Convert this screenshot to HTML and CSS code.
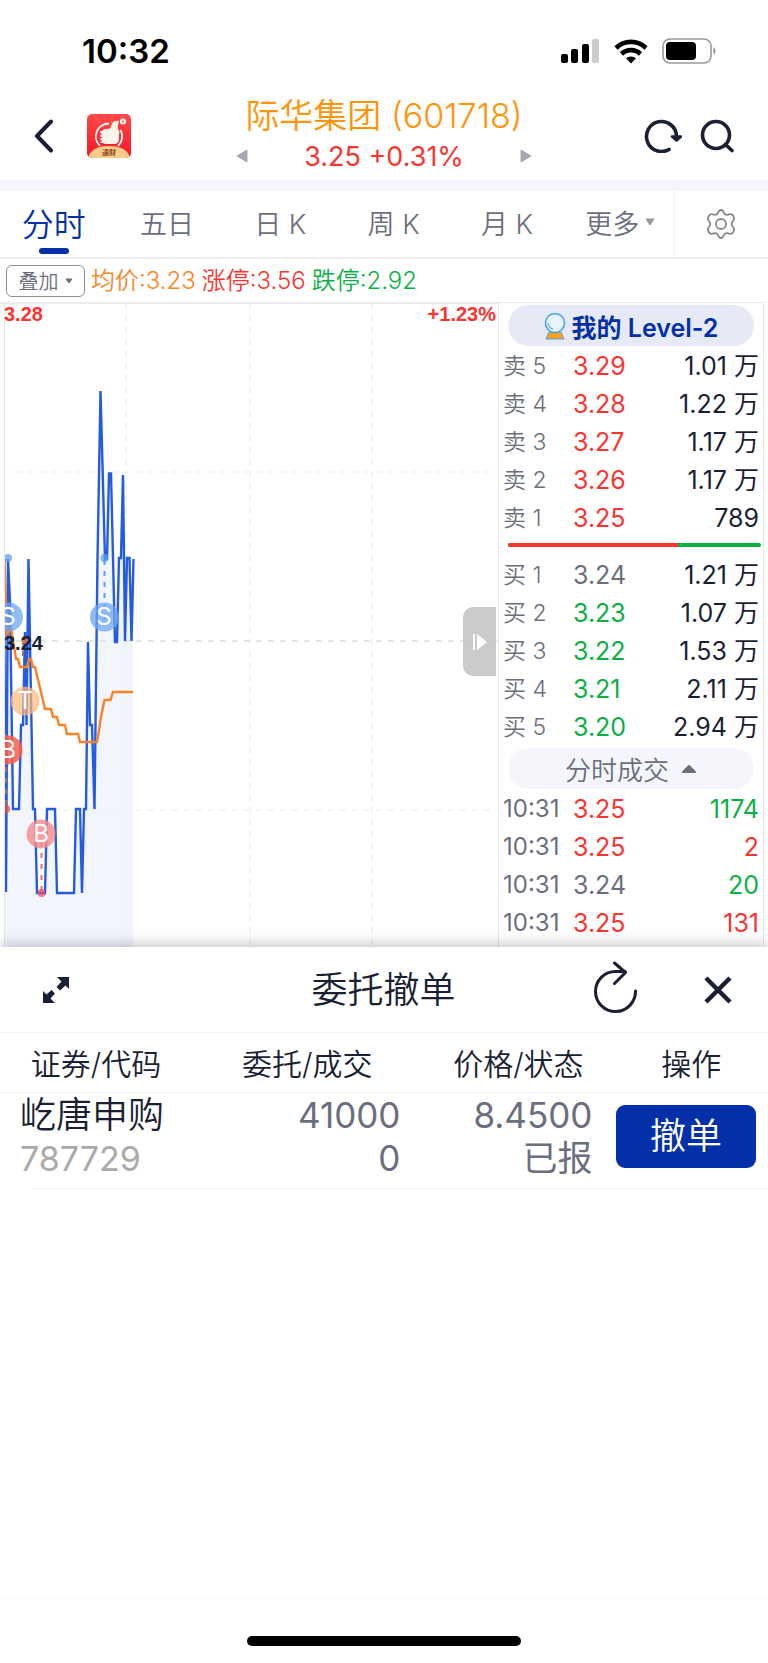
FILE: index.html
```html
<!DOCTYPE html>
<html lang="zh-CN">
<head>
    <meta charset="UTF-8">
    <meta name="viewport" content="width=device-width, initial-scale=1.0">
    <title>际华集团 (601718)</title>
    <link rel="stylesheet" href="styles.css">
</head>
<body>
    <!-- Status bar -->
    <div class="status-bar">
        <span class="clock">10:32</span>
        <div class="status-icons">
            <svg width="39" height="25" viewBox="0 0 39 25">
                <rect x="0" y="15" width="7" height="9" rx="2"/>
                <rect x="10" y="10" width="7" height="14" rx="2"/>
                <rect x="21" y="5" width="7" height="19" rx="2"/>
                <rect x="31" y="0" width="7" height="24" rx="2" fill="#ccc"/>
            </svg>
            <svg width="34" height="25" viewBox="0 0 34 25">
                <path d="M17 24.500l-5-5.200a7.500 7.500 0 0 1 10 0z"/>
                <path d="M2 9a21.500 21.500 0 0 1 30 0M7.500 15a13.500 13.500 0 0 1 19 0" fill="none" stroke="#000" stroke-width="4.600"/>
            </svg>
            <svg width="55" height="26" viewBox="0 0 55 26">
                <rect x="1" y="1" width="48" height="24" rx="7" fill="none" stroke="#999" stroke-width="1.600"/>
                <rect x="4" y="4" width="30" height="18" rx="4"/>
                <path d="M51.500 9q4 4 0 8z" fill="#888"/>
            </svg>
        </div>
    </div>

    <!-- Stock header -->
    <header class="stock-header">
        <div class="header-side">
            <button class="icon-btn" aria-label="返回">
                <svg width="20" height="34" viewBox="0 0 20 34">
                    <path d="M17 2.500L3 17l14 14.500" class="line" stroke-width="4"/>
                </svg>
            </button>
            <a href="#" class="logo" aria-label="通财">
                <svg width="44" height="44" viewBox="0 0 44 44">
                    <defs>
                        <linearGradient id="red" x1="0" y1="0" x2="0" y2="1">
                            <stop offset="0" stop-color="#ff4a48"/>
                            <stop offset="1" stop-color="#fa1527"/>
                        </linearGradient>
                        <clipPath id="logo-clip"><rect width="44" height="44" rx="5"/></clipPath>
                    </defs>
                    <g clip-path="url(#logo-clip)">
                        <rect width="44" height="44" fill="url(#red)"/>
                        <path d="M22 20L6 0M22 20L16 0M22 20L26 0" stroke="#ff7668" stroke-width="1" opacity=".5"/>
                        <path d="M22 9.500A13 13 0 0 0 13 32M31 32A13 13 0 0 0 33.500 16" fill="none" stroke="#fff" stroke-width="1.800"/>
                        <path d="M15 17q1-2 4-2 4 0 5-2 1-5 4-6 4-1 4 1-2 3-1 7 2 2 1 6v5q-1 4-5 4h-8q-4 0-4-4z" fill="#fff4e8"/>
                        <path d="M15 17v12" stroke="#fff" stroke-width="3" stroke-dasharray="2.500 1"/>
                        <circle cx="36" cy="7.500" r="3" fill="#fff"/>
                        <circle cx="36" cy="7.500" r="1" fill="#fa3a3a"/>
                        <path d="M1 44q3-12 21-12t21 12z" fill="#f7cb88"/>
                        <text x="22" y="41" class="logo-text">通财</text>
                    </g>
                </svg>
            </a>
        </div>
        <div class="stock">
            <button class="icon-btn" aria-label="上一只">
                <svg width="12" height="14" viewBox="0 0 12 14"><path d="M11 1v12L1 7z" class="arrow"/></svg>
            </button>
            <div class="stock-text">
                <h1 class="stock-name">际华集团 (601718)</h1>
                <p class="stock-price">3.25 +0.31%</p>
            </div>
            <button class="icon-btn" aria-label="下一只">
                <svg width="12" height="14" viewBox="0 0 12 14"><path d="M1 1v12l10-6z" class="arrow"/></svg>
            </button>
        </div>
        <div class="header-side header-tools">
            <button class="icon-btn" aria-label="刷新">
                <svg width="38" height="34" viewBox="0 0 38 34">
                    <path d="M25 30.500A15 15 0 1 1 32.500 17" class="line" stroke-width="3.600"/>
                    <path d="M28 17.500l4.500 4 4.500-4z" class="line arrow-head" stroke-width="2.600"/>
                </svg>
            </button>
            <button class="icon-btn" aria-label="搜索">
                <svg width="34" height="34" viewBox="0 0 34 34">
                    <circle cx="16" cy="16" r="13.500" class="line" stroke-width="3.600"/>
                    <path d="M25.500 25.500l6.500 6" class="line" stroke-width="3.600"/>
                </svg>
            </button>
        </div>
    </header>

    <!-- Period tabs -->
    <nav class="tabs">
        <a href="#" class="tab active">分时</a>
        <a href="#" class="tab">五日</a>
        <a href="#" class="tab">日 K</a>
        <a href="#" class="tab">周 K</a>
        <a href="#" class="tab">月 K</a>
        <a href="#" class="tab tab-more">更多
            <svg width="10" height="8" viewBox="0 0 10 8"><path d="M1 1h8L5 7z" fill="#999" stroke="#999" stroke-linejoin="round"/></svg>
        </a>
        <button class="icon-btn settings" aria-label="设置">
            <svg width="30" height="32" viewBox="-15 -16 30 32">
                <path d="M-3-11Q-2-14 0-14T3-11Q4-9 6.500-9.200Q10-10.500 11.500-9T13.200-5Q13-3.500 11.500-2.500Q10 0 11.500 2.500Q13 3.500 13.200 5T11.500 9Q10 10.500 6.500 9.200Q4 9 3 11Q2 14 0 14T-3 11Q-4 9-6.500 9.200Q-10 10.500-11.500 9T-13.200 5Q-13 3.500-11.500 2.500Q-10 0-11.500-2.500Q-13-3.500-13.200-5T-11.500-9Q-10-10.500-6.500-9.200Q-4-9-3-11Z" fill="none" stroke="#888" stroke-width="1.800"/>
                <circle r="5" fill="none" stroke="#888" stroke-width="1.800"/>
            </svg>
        </button>
    </nav>

    <div class="info-row">
        <button class="overlay-btn">叠加
            <svg width="8" height="6" viewBox="0 0 8 6"><path d="M1 1h6L4 5z" fill="#6b6e7d" stroke="#6b6e7d" stroke-linejoin="round"/></svg>
        </button>
        <span class="orange">均价:3.23</span>
        <span class="red">涨停:3.56</span>
        <span class="green">跌停:2.92</span>
    </div>

    <main class="quote">
        <!-- Time-sharing chart -->
        <section class="chart">
            <svg class="chart-plot" viewBox="0 2 498 643" preserveAspectRatio="xMinYMin slice">
                <defs>
                    <clipPath id="plot-clip"><rect x="4" y="0" width="494" height="645"/></clipPath>
                </defs>
                <g clip-path="url(#plot-clip)">
                    <path d="M4 257L6 590 8 257 13 507H19L21 423H23L25 339 27 423 29 257 33 507H35L37 591H45L47 507H55L57 591H74L76 507H80L82 591 84 507H86L88 339 90 423H92L94 507 97 339 100 89 105 257H107L109 172H111L115 339H117L119 257H121L123 172 125 339 127 257H129L131 339 133 257V645H4z" fill="#f3f5fd"/>
                    <path d="M126 1V645M250 1V645M372 1V645" stroke="#eef1f2" stroke-width="1.500" stroke-dasharray="6 6"/>
                    <path d="M4 170H498M4 508H498" stroke="#f1f3f4" stroke-width="1.500" stroke-dasharray="6 6"/>
                    <path d="M4 339H498" stroke="#d9dcdf" stroke-width="1.500" stroke-dasharray="6 6"/>
                    <path d="M4 257L6 590 8 257 10 300 13 507H19L21 423H23L25 330 26.500 423 28.500 257 33 507H35L37 591H45L47 507H55L57 591H74L76 507H80L82 591 84 507H86L88 340 90 423H92L94.500 507 97.500 257 100.500 89 105 257H107L109 171.500H111L115 340H117L119 256H121L123 173 125 339 127 256H129.500L131.500 339 133.500 257" fill="none" stroke="#245be0" stroke-width="2.400"/>
                    <path d="M4.500 257L7 332 11 326 16 357H18L20 365H27L29 357H31L33 365H35L45 407H51L53 415H57L59 423H65L67 432H78L80 440H97Q99 429 101 415L104.500 398H110.500L113 390H133" fill="none" stroke="#fb8122" stroke-width="2.400"/>
                    <path d="M104.500 258V322" class="dash" stroke="#5da2f0"/>
                    <path d="M23 338V356M6 432V508" class="dash" stroke="#a86c5f"/>
                    <path d="M41.500 540V590" class="dash" stroke="#f06a70"/>
                    <circle cx="8" cy="256" r="4" fill="#619de8" opacity=".75"/>
                    <circle cx="104.500" cy="256" r="4" fill="#619de8" opacity=".75"/>
                    <circle cx="25" cy="338" r="4" fill="#dc8543" opacity=".75"/>
                    <circle cx="6" cy="507" r="4" fill="#ea533d" opacity=".8"/>
                    <circle cx="41.500" cy="591" r="4" fill="#ed4f62" opacity=".75"/>
                    <circle cx="8.500" cy="315" r="14.500" fill="#6ca5f4" opacity=".75"/>
                    <circle cx="104.500" cy="315" r="14.500" fill="#6ca5f4" opacity=".75"/>
                    <circle cx="25" cy="399" r="14.500" fill="#ffb978" opacity=".7"/>
                    <circle cx="8" cy="448" r="14.500" fill="#fb5c4a" opacity=".85"/>
                    <circle cx="41" cy="532" r="14.500" fill="#f98b8a" opacity=".8"/>
                    <text x="8" y="323" class="mark">S</text>
                    <text x="104" y="323" class="mark">S</text>
                    <text x="25" y="407" class="mark">T</text>
                    <text x="8" y="456" class="mark">B</text>
                    <text x="41" y="540" class="mark">B</text>
                </g>
                <text x="4" y="348" class="axis">3.24</text>
            </svg>
            <div class="chart-labels">
                <span>3.28</span>
                <span>+1.23%</span>
            </div>
            <button class="fold-btn" aria-label="收起盘口">
                <svg width="16" height="18" viewBox="0 0 16 18"><path d="M1 1h2v16H1zM5 1l10 8-10 8z" fill="#fff"/></svg>
            </button>
        </section>

        <!-- Order book -->
        <section class="book">
            <button class="level-btn">
                <svg width="22" height="28" viewBox="0 0 22 28">
                    <path d="M5 20h12l3 7H2z" fill="#f9a11b" stroke="#4aa3e8" stroke-width="1"/>
                    <circle cx="11" cy="11" r="9.500" fill="#e9f3fd" stroke="#4aa3e8" stroke-width="1.600"/>
                    <path d="M4 11q1 5 5 6" fill="none" stroke="#4aa3e8" stroke-width="1.200"/>
                </svg>
                我的 Level-2
            </button>
            <table class="book-table">
                <tbody>
                    <tr><th>卖 5</th><td class="red">3.29</td><td>1.01 万</td></tr>
                    <tr><th>卖 4</th><td class="red">3.28</td><td>1.22 万</td></tr>
                    <tr><th>卖 3</th><td class="red">3.27</td><td>1.17 万</td></tr>
                    <tr><th>卖 2</th><td class="red">3.26</td><td>1.17 万</td></tr>
                    <tr><th>卖 1</th><td class="red">3.25</td><td>789</td></tr>
                </tbody>
            </table>
            <div class="ratio"><span class="ratio-sell" style="width: 67%"></span></div>
            <table class="book-table">
                <tbody>
                    <tr><th>买 1</th><td class="grey">3.24</td><td>1.21 万</td></tr>
                    <tr><th>买 2</th><td class="green">3.23</td><td>1.07 万</td></tr>
                    <tr><th>买 3</th><td class="green">3.22</td><td>1.53 万</td></tr>
                    <tr><th>买 4</th><td class="green">3.21</td><td>2.11 万</td></tr>
                    <tr><th>买 5</th><td class="green">3.20</td><td>2.94 万</td></tr>
                </tbody>
            </table>
            <button class="deal-btn">分时成交
                <svg width="16" height="12" viewBox="0 0 16 12"><path d="M2 9h12L8 3z" fill="#6b6e7d" stroke="#6b6e7d" stroke-width="2" stroke-linejoin="round"/></svg>
            </button>
            <table class="book-table deals">
                <tbody>
                    <tr><th>10:31</th><td class="red">3.25</td><td class="green">1174</td></tr>
                    <tr><th>10:31</th><td class="red">3.25</td><td class="red">2</td></tr>
                    <tr><th>10:31</th><td class="grey">3.24</td><td class="green">20</td></tr>
                    <tr><th>10:31</th><td class="red">3.25</td><td class="red">131</td></tr>
                </tbody>
            </table>
        </section>
    </main>

    <!-- Cancel order sheet -->
    <section class="sheet">
        <div class="sheet-header">
            <div class="sheet-side">
                <button class="icon-btn" aria-label="展开">
                    <svg width="28" height="28" viewBox="0 0 28 28">
                        <path d="M15 1h12v12l-3.500-3.500-5.500 5-3.500-3.500 5-5.500zM1 27V15l3.500 3.500 5-4.500 3.500 3.500-4.500 5L13 27z" fill="#1a1f33"/>
                    </svg>
                </button>
            </div>
            <h2 class="sheet-title">委托撤单</h2>
            <div class="sheet-side sheet-tools">
                <button class="icon-btn" aria-label="刷新">
                    <svg width="44" height="58" viewBox="0 0 44 58">
                        <path d="M41.500 30A20 20 0 1 1 21.500 10.500H31" class="line" stroke-width="3"/>
                        <path d="M20.500 2L31.500 11.500 20.500 22.500" class="line" stroke-width="3"/>
                    </svg>
                </button>
                <button class="icon-btn" aria-label="关闭">
                    <svg width="28" height="28" viewBox="0 0 28 28"><path d="M2 2l24 24M26 2L2 26" stroke="#1a1f33" stroke-width="4.500"/></svg>
                </button>
            </div>
        </div>
        <table class="orders">
            <thead>
                <tr><th>证券/代码</th><th class="wide">委托/成交</th><th>价格/状态</th><th class="narrow">操作</th></tr>
            </thead>
            <tbody>
                <tr>
                    <td class="name">屹唐申购<br><span class="code">787729</span></td>
                    <td>41000<br>0</td>
                    <td>8.4500<br>已报</td>
                    <td class="action"><button class="cancel-btn">撤单</button></td>
                </tr>
            </tbody>
        </table>
    </section>

    <footer class="home-bar"><span></span></footer>
</body>
</html>
```

FILE: styles.css
```css
* {
    box-sizing: border-box;
}

body {
    margin: 0;
    min-height: 100vh;
    display: flex;
    flex-direction: column;
    font-family: Inter, "Noto Sans CJK SC", sans-serif;
    font-size: 25px;
    font-weight: 350;
    color: #1a1f33;
    background: #fff;
}

svg {
    display: block;
    flex: none;
}

button {
    font: inherit;
    color: inherit;
    border: none;
    background: none;
    padding: 0;
    cursor: pointer;
}

a {
    color: inherit;
    text-decoration: none;
}

.icon-btn {
    display: flex;
    align-items: center;
    justify-content: center;
}

.line {
    fill: none;
    stroke: #1a1f33;
    stroke-linecap: round;
    stroke-linejoin: round;
}

.arrow-head {
    fill: #1a1f33;
}

.red {
    color: #fb3430;
}

.green {
    color: #0bb043;
}

.orange {
    color: #fd8424;
}

.grey {
    color: #6b6e7d;
}

/* Status bar */
.status-bar {
    height: 102px;
    padding: 0 51px 0 82px;
    display: flex;
    justify-content: space-between;
    align-items: center;
}

.clock {
    font-size: 33px;
    font-weight: 600;
    color: #000;
}

.status-icons {
    display: flex;
    align-items: center;
    gap: 14px;
}

/* Stock header */
.stock-header {
    height: 89px;
    padding: 0 34px 10px;
    display: flex;
    align-items: center;
    border-bottom: 11px solid #f4f6fb;
}

.header-side {
    flex: 1;
    display: flex;
    align-items: center;
    gap: 33px;
}

.header-tools {
    justify-content: flex-end;
    gap: 18px;
}

.logo-text {
    font-size: 7px;
    font-weight: 700;
    fill: #8a4a1c;
    text-anchor: middle;
}

.stock {
    display: flex;
    align-items: flex-end;
}

.stock .icon-btn {
    height: 42px;
}

.stock-text {
    margin: 0 -3px;
    text-align: center;
}

.stock-name {
    margin: 0;
    font-size: 34px;
    line-height: 42px;
    font-weight: 350;
    color: #ff9408;
}

.stock-price {
    margin: 0;
    font-size: 27px;
    font-weight: 400;
    line-height: 40px;
    color: #fb3430;
}

.arrow {
    fill: #a5a6b0;
    stroke: #a5a6b0;
    stroke-linejoin: round;
}

/* Tabs */
.tabs {
    height: 68px;
    display: flex;
    border-bottom: 2px solid #eeeff0;
    color: #6b6e7d;
    font-size: 27px;
}

.tab {
    flex: 1;
    display: flex;
    justify-content: center;
    align-items: center;
    position: relative;
    padding: 0 0 4px 6px;
}

.tab.active {
    padding-left: 0;
    font-size: 32px;
    color: #0330a8;
}

.tab.active::after {
    content: "";
    position: absolute;
    bottom: 3px;
    width: 30px;
    height: 6px;
    border-radius: 3px;
    background: #0330a8;
}

.tab-more {
    gap: 6px;
}

.settings {
    width: 94px;
    border-left: 1px solid #eeeff0;
}

.info-row {
    height: 43px;
    padding: 0 6px;
    display: flex;
    align-items: center;
    gap: 6px;
    font-size: 24px;
}

.info-row span {
    padding-bottom: 4px;
}

.overlay-btn {
    height: 32px;
    width: 79px;
    display: flex;
    align-items: center;
    justify-content: center;
    gap: 6px;
    font-size: 20px;
    color: #6b6e7d;
    border: 1px solid #8b8d98;
    border-radius: 6px;
}

/* Chart and order book */
.quote {
    height: 645px;
    display: flex;
    overflow: hidden;
}

.chart {
    flex: 1;
    position: relative;
    border-top: 2px solid #eaedee;
}

.chart::before {
    content: "";
    position: absolute;
    inset: 0 auto 0 4px;
    border-left: 1px solid #e4e7ea;
}

.chart-plot {
    width: 100%;
    height: 100%;
}

.dash {
    stroke-width: 2;
    stroke-dasharray: 5 6;
}

.mark {
    font-size: 24px;
    font-weight: 400;
    fill: #fff;
    text-anchor: middle;
}

.axis {
    font: bold 20px "Liberation Sans", sans-serif;
    fill: #1a1f33;
}

.chart-labels {
    position: absolute;
    top: 0;
    left: 4px;
    right: 2px;
    display: flex;
    justify-content: space-between;
    font: bold 20px/20px "Liberation Sans", sans-serif;
    color: #fb3430;
}

.fold-btn {
    position: absolute;
    right: 2px;
    top: 303px;
    width: 33px;
    height: 69px;
    display: flex;
    align-items: center;
    justify-content: center;
    background: rgba(190, 190, 190, 0.8);
    border-radius: 10px 0 0 10px;
}

.book {
    width: 266px;
    margin-right: 4px;
    border: 1px solid #e4e7ea;
    border-bottom: none;
}

.level-btn,
.deal-btn {
    width: 246px;
    height: 41px;
    margin: 2px 9px 1px;
    display: flex;
    align-items: center;
    justify-content: center;
    border-radius: 21px;
}

.level-btn {
    gap: 6px;
    background: #e6eaf6;
    color: #0330a8;
    font-weight: 600;
}

.deal-btn {
    gap: 12px;
    background: #f4f6fb;
    color: #6b6e7d;
    font-size: 26px;
}

.book-table {
    width: 100%;
    border-collapse: collapse;
    table-layout: fixed;
}

.book-table th,
.book-table td {
    height: 38px;
    line-height: 38px;
    padding: 0;
    font-weight: 400;
    white-space: nowrap;
}

.book-table th {
    width: 74px;
    padding-left: 4px;
    text-align: left;
    font-size: 23px;
    font-weight: 350;
    color: #6b6e7d;
}

.book-table.deals th {
    font-size: 24px;
    font-weight: 400;
}

.book-table td:nth-child(2) {
    width: 60px;
}

.book-table td:last-child {
    padding-right: 4px;
    text-align: right;
}

.ratio {
    height: 4px;
    margin: 6px 2px 9px 9px;
    background: #0bb043;
    border-radius: 2px;
}

.ratio-sell {
    display: block;
    height: 4px;
    background: #fb3430;
    border-radius: 2px 0 0 2px;
}

/* Sheet */
.sheet {
    flex: 1;
    position: relative;
    background: #fff;
    box-shadow: 0 -2px 14px rgba(0, 0, 0, 0.25);
    border-bottom: 1px solid #f8f8f9;
}

.sheet-header {
    height: 86px;
    padding: 0 36px 0 35px;
    display: flex;
    align-items: center;
    border-bottom: 1px solid #f3f3f5;
}

.sheet-side {
    flex: 1;
    display: flex;
    align-items: center;
    padding-left: 7px;
}

.sheet-tools {
    justify-content: flex-end;
    gap: 66px;
}

.sheet-title {
    margin: 0;
    font-size: 36px;
    font-weight: 350;
    line-height: 42px;
}

.orders {
    width: 100%;
    border-collapse: collapse;
    table-layout: fixed;
}

.orders th {
    width: 25%;
    height: 59px;
    padding: 0;
    font-size: 30px;
    font-weight: 350;
    border-bottom: 1px solid #f3f3f5;
}

.orders th.wide {
    width: 30%;
}

.orders th.narrow {
    width: 20%;
}

.orders td {
    height: 97px;
    padding: 0 22px 8px 0;
    font-size: 35px;
    font-weight: 400;
    line-height: 43px;
    text-align: right;
    color: #6b6e7d;
    background: linear-gradient(#f3f3f5, #f3f3f5) 0 100% / 100% 1px no-repeat;
}

/* the row divider starts inside the first column */
.orders td.name {
    padding-left: 20px;
    padding-right: 0;
    font-size: 36px;
    font-weight: 350;
    text-align: left;
    color: #1a1f33;
    background-position: 32px 100%;
}

.code {
    font-size: 34px;
    font-weight: 400;
    color: #aaa;
}

.orders td.action {
    padding-right: 12px;
}

.cancel-btn {
    width: 140px;
    height: 63px;
    border-radius: 9px;
    background: #0330a8;
    color: #fff;
    font-size: 36px;
    font-weight: 350;
}

.home-bar {
    position: relative;
    height: 64px;
    display: flex;
    justify-content: center;
    align-items: flex-end;
    padding-bottom: 17px;
    background: #fff;
}

.home-bar span {
    width: 274px;
    height: 10px;
    border-radius: 5px;
    background: #000;
}
```
